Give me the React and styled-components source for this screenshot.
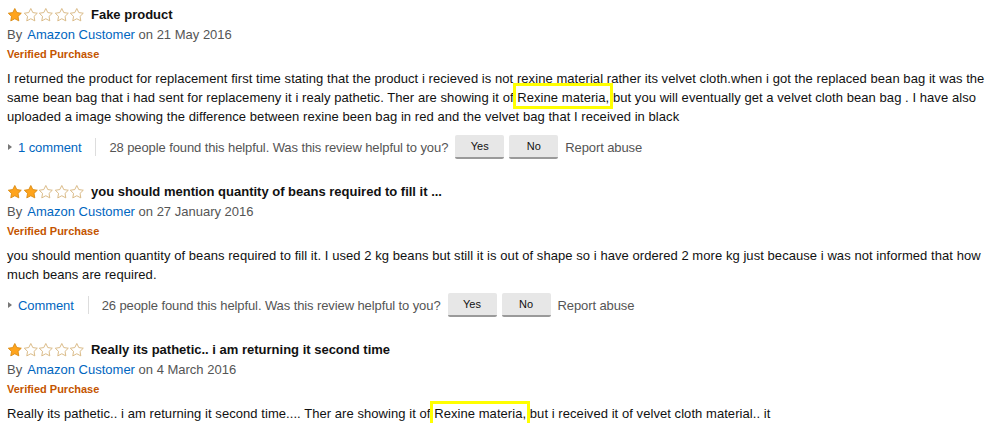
import React from 'react';
import styled, { createGlobalStyle } from 'styled-components';

const Global = createGlobalStyle`
  html, body { margin: 0; padding: 0; background: #fff; }
  body {
    font-family: "Liberation Sans", Arial, sans-serif;
    font-size: 13px;
    color: #111;
  }
`;

const Page = styled.div`
  display: flex;
  flex-direction: column;
  gap: 23px;
  padding: 5px 3px 0 7px;
`;

const Review = styled.div`
  display: flex;
  flex-direction: column;
`;

const TitleRow = styled.div`
  display: flex;
  align-items: center;
  gap: 6px;
  height: 20px;
`;

const Stars = styled.div`
  display: flex;
  align-items: center;
  margin-top: -1px;
`;

const Title = styled.span`
  font-weight: 700;
  font-size: 13px;
  line-height: 20px;
  color: #111;
`;

const Byline = styled.div`
  line-height: 19px;
  color: #555;
`;

const Link = styled.a`
  color: #0066c0;
  text-decoration: none;
  margin-left: ${(p) => (p.$gap ? '1.5px' : '0')};
`;

const Verified = styled.div`
  font-size: 11px;
  font-weight: 700;
  line-height: 20px;
  color: #c45500;
`;

const Body = styled.p`
  margin: 5px 0 0;
  line-height: 19px;
  letter-spacing: 0.06px;
  color: #111;
`;

const Highlight = styled.span`
  position: relative;
  &::after {
    content: '';
    position: absolute;
    left: -4px;
    right: -4px;
    top: ${(p) => (p.$tall ? '-5px' : '-7px')};
    bottom: ${(p) => (p.$tall ? '-10px' : '-4px')};
    border: 3px solid #ffff00;
    pointer-events: none;
  }
`;

const Actions = styled.div`
  display: flex;
  align-items: center;
  height: 24px;
  margin-top: 9px;
  color: #555;
  line-height: 19px;
  letter-spacing: -0.1px;
`;

const Caret = styled.span`
  width: 0;
  height: 0;
  border-left: 4px solid #777;
  border-top: 3.5px solid transparent;
  border-bottom: 3.5px solid transparent;
  margin: 0 6px 0 1px;
`;

const Divider = styled.span`
  width: 1px;
  height: 18px;
  background: #ddd;
  margin: 0 13px 0 14px;
`;

const Helpful = styled.span`
  color: #555;
`;

const VoteButton = styled.button`
  flex: none;
  box-sizing: border-box;
  width: 49px;
  height: 24px;
  margin: 0 0 0 ${(p) => (p.$first ? '7px' : '5px')};
  padding: 0;
  border: 0;
  border-bottom: 2px solid #9a9a9a;
  border-radius: 2px;
  background: #e7e7e7;
  font-family: "Liberation Sans", Arial, sans-serif;
  font-size: 11px;
  letter-spacing: 0;
  color: #111;
  line-height: 22px;
`;

const Report = styled.span`
  margin-left: 7px;
  color: #555;
`;

const Star = ({ filled }) => (
  <svg width="15.6" height="16" viewBox="0 0 24 24">
    <polygon
      points="12,2 15.09,8.26 22,9.27 17,14.14 18.18,21.02 12,17.77 5.82,21.02 7,14.14 2,9.27 8.91,8.26"
      fill={filled ? '#ffa41c' : '#ffffff'}
      stroke={filled ? '#d98a12' : '#d6b47c'}
      strokeWidth="1.4"
      strokeLinejoin="round"
    />
  </svg>
);

const Rating = ({ value }) => (
  <Stars>
    {[0, 1, 2, 3, 4].map((i) => (
      <Star key={i} filled={i < value} />
    ))}
  </Stars>
);

const ReviewItem = ({ rating, title, date, children, comment, helpful, showActions = true }) => (
  <Review>
    <TitleRow>
      <Rating value={rating} />
      <Title>{title}</Title>
    </TitleRow>
    <Byline>
      By <Link $gap href="#">Amazon Customer</Link> on {date}
    </Byline>
    <Verified>Verified Purchase</Verified>
    <Body>{children}</Body>
    {showActions && (
      <Actions>
        <Caret />
        <Link href="#">{comment}</Link>
        <Divider />
        <Helpful>{helpful} people found this helpful. Was this review helpful to you?</Helpful>
        <VoteButton $first>Yes</VoteButton>
        <VoteButton>No</VoteButton>
        <Report>Report abuse</Report>
      </Actions>
    )}
  </Review>
);

export default function App() {
  return (
    <>
      <Global />
      <Page>
        <ReviewItem rating={1} title="Fake product" date="21 May 2016" comment="1 comment" helpful={28}>
          I returned the product for replacement first time stating that the product i recieved is not rexine
          material rather its velvet cloth.when i got the replaced bean bag it was the same bean bag that i had
          sent for replacemeny it i realy pathetic. Ther are showing it of <Highlight>Rexine materia,</Highlight> but
          you will eventually get a velvet cloth bean bag . I have also uploaded a image showing the difference
          between rexine been bag in red and the velvet bag that I received in black
        </ReviewItem>
        <ReviewItem
          rating={2}
          title="you should mention quantity of beans required to fill it ..."
          date="27 January 2016"
          comment="Comment"
          helpful={26}
        >
          you should mention quantity of beans required to fill it. I used 2 kg beans but still it is out of shape
          so i have ordered 2 more kg just because i was not informed that how much beans are required.
        </ReviewItem>
        <ReviewItem
          rating={1}
          title="Really its pathetic.. i am returning it second time"
          date="4 March 2016"
          showActions={false}
        >
          Really its pathetic.. i am returning it second time.... Ther are showing it of{' '}
          <Highlight $tall>Rexine materia,</Highlight> but i received it of velvet cloth material.. it
        </ReviewItem>
      </Page>
    </>
  );
}
